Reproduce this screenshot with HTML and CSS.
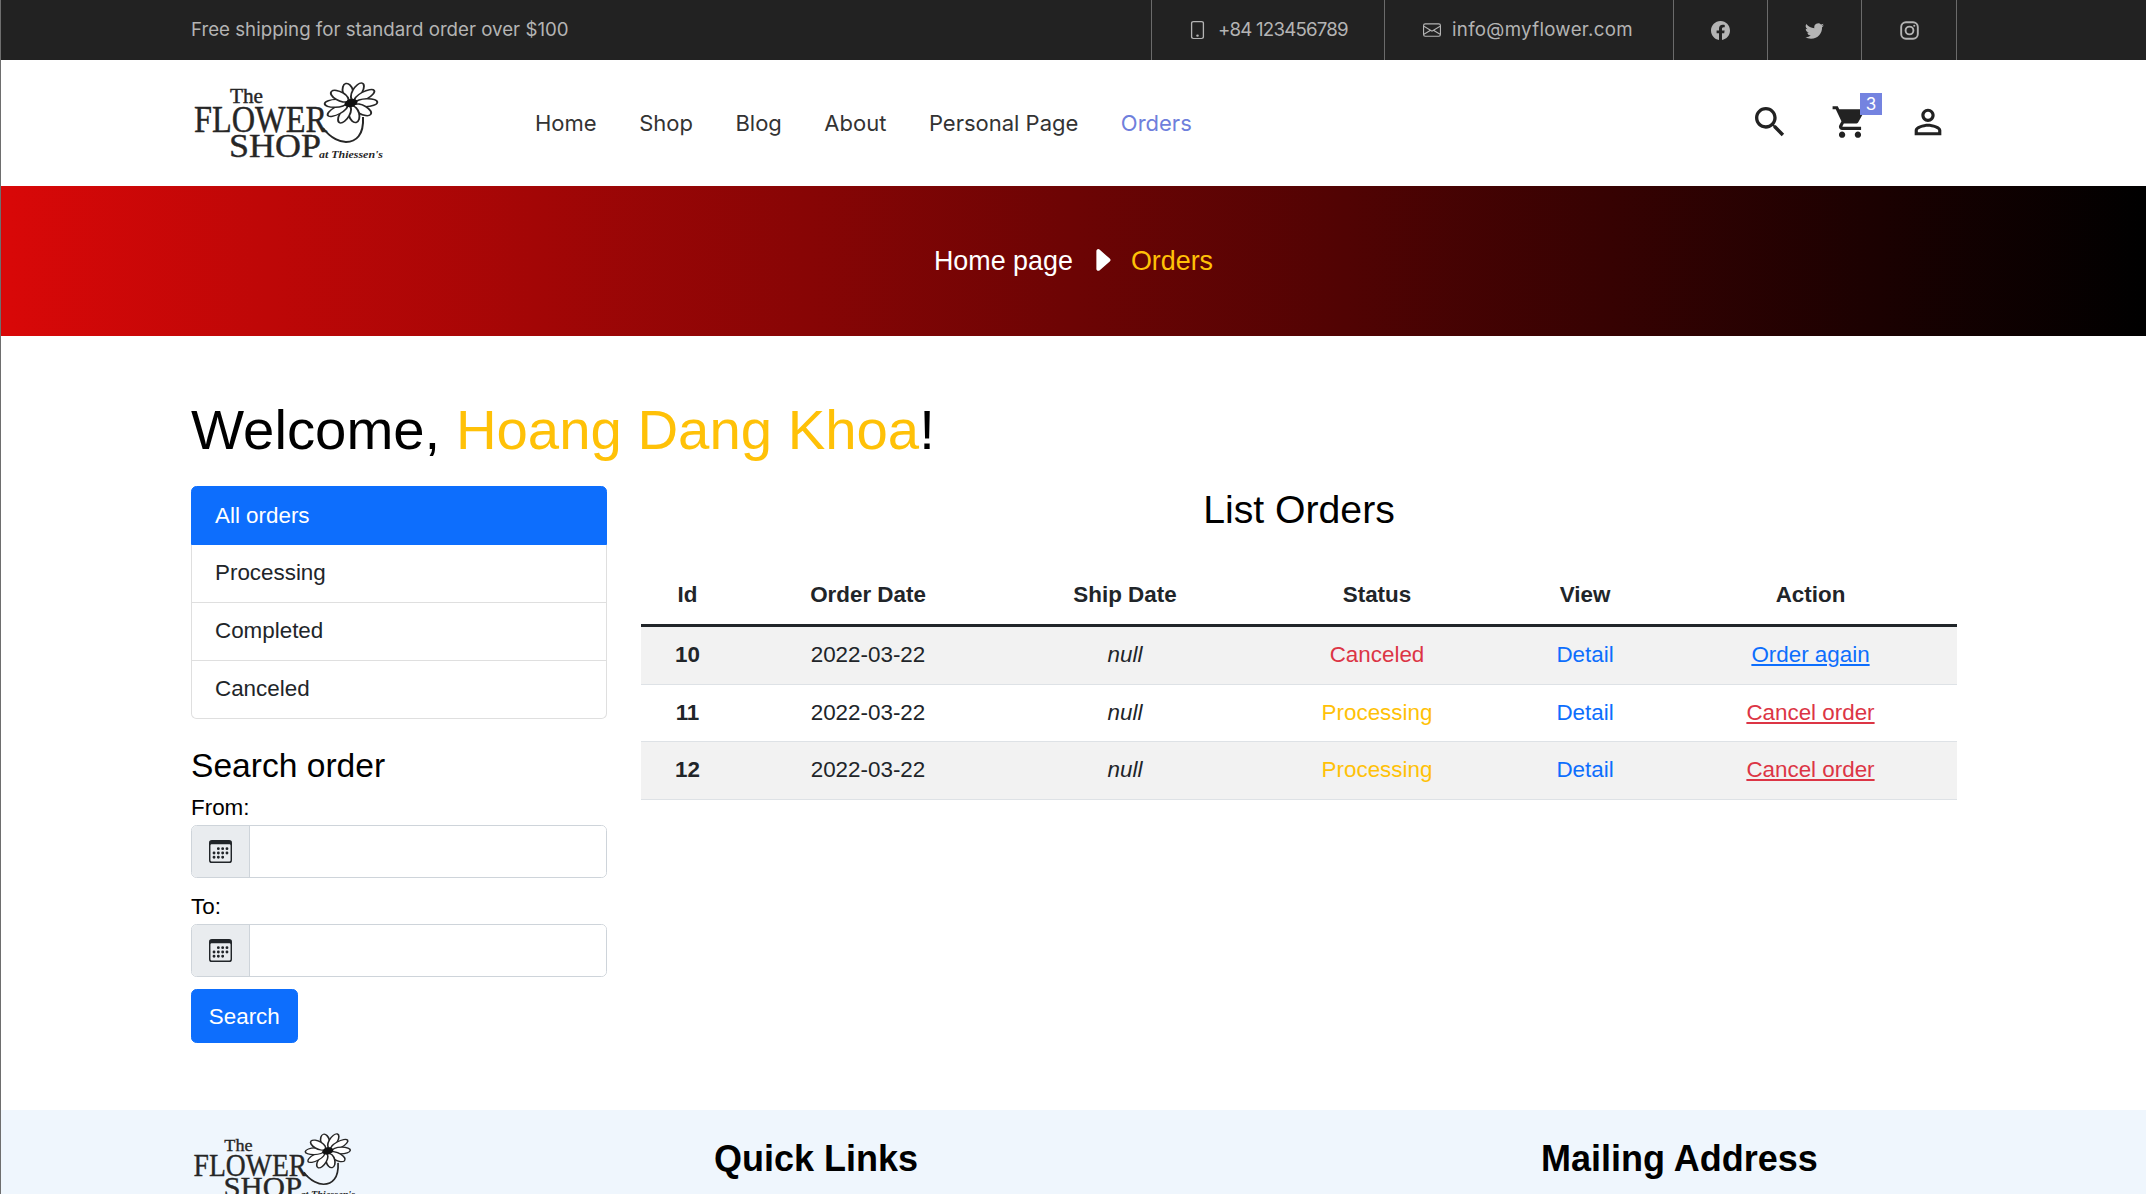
FILE: index.html
```html
<!DOCTYPE html>
<html lang="en">
<head>
<meta charset="utf-8">
<title>Orders</title>
<link rel="stylesheet" href="styles.css">
</head>
<body>
<div class="topbar">
  <span class="promo">Free shipping for standard order over $100</span>
  <a class="cell cell-phone"><svg class="ti ti-phone" viewBox="0 0 16 16" preserveAspectRatio="none"><path d="M11 1a1 1 0 0 1 1 1v12a1 1 0 0 1-1 1H5a1 1 0 0 1-1-1V2a1 1 0 0 1 1-1h6zM5 0a2 2 0 0 0-2 2v12a2 2 0 0 0 2 2h6a2 2 0 0 0 2-2V2a2 2 0 0 0-2-2H5z"/><path d="M8 14a1 1 0 1 0 0-2 1 1 0 0 0 0 2z"/></svg>+84 123456789</a>
  <a class="cell cell-mail"><svg class="ti" viewBox="0 0 16 16"><path d="M0 4a2 2 0 0 1 2-2h12a2 2 0 0 1 2 2v8a2 2 0 0 1-2 2H2a2 2 0 0 1-2-2V4Zm2-1a1 1 0 0 0-1 1v.217l7 4.2 7-4.2V4a1 1 0 0 0-1-1H2Zm13 2.383-4.708 2.825L15 11.105V5.383Zm-.034 6.876-5.64-3.471L8 9.583l-1.326-.795-5.64 3.47A1 1 0 0 0 2 13h12a1 1 0 0 0 .966-.741ZM1 11.105l4.708-2.897L1 5.383v5.722Z"/></svg>info@myflower.com</a>
  <a class="cell cell-social"><svg class="ti" viewBox="0 0 16 16"><path d="M16 8.049c0-4.446-3.582-8.05-8-8.05C3.58 0-.002 3.603-.002 8.05c0 4.017 2.926 7.347 6.75 7.951v-5.625h-2.03V8.05H6.75V6.275c0-2.017 1.195-3.131 3.022-3.131.876 0 1.791.157 1.791.157v1.98h-1.009c-.993 0-1.303.621-1.303 1.258v1.51h2.218l-.354 2.326H9.25V16c3.824-.604 6.75-3.934 6.75-7.951z"/></svg></a>
  <a class="cell cell-social"><svg class="ti" viewBox="0 0 16 16"><path d="M5.026 15c6.038 0 9.341-5.003 9.341-9.334 0-.14 0-.282-.006-.422A6.685 6.685 0 0 0 16 3.542a6.658 6.658 0 0 1-1.889.518 3.301 3.301 0 0 0 1.447-1.817 6.533 6.533 0 0 1-2.087.793A3.286 3.286 0 0 0 7.875 6.03a9.325 9.325 0 0 1-6.767-3.429 3.289 3.289 0 0 0 1.018 4.382A3.323 3.323 0 0 1 .64 6.575v.045a3.288 3.288 0 0 0 2.632 3.218 3.203 3.203 0 0 1-.865.115 3.23 3.23 0 0 1-.614-.057 3.283 3.283 0 0 0 3.067 2.277A6.588 6.588 0 0 1 .78 13.58a6.32 6.32 0 0 1-.78-.045A9.344 9.344 0 0 0 5.026 15z"/></svg></a>
  <a class="cell cell-social"><svg class="ti ti-line" viewBox="0 0 16 16"><rect x="1" y="1" width="14" height="14" rx="4"/><circle cx="8" cy="8" r="3.3"/><circle class="ti-dot" cx="12" cy="4" r=".9"/></svg></a>
</div>

<header class="header">
  <svg class="logo" viewBox="0 0 200 84">
    <text class="logo-serif" x="39" y="22" font-size="20" textLength="33" lengthAdjust="spacingAndGlyphs">The</text>
    <text class="logo-serif" x="3" y="51" font-size="38" textLength="133" lengthAdjust="spacingAndGlyphs">FLOWER</text>
    <text class="logo-serif" x="38" y="76" font-size="34" textLength="92" lengthAdjust="spacingAndGlyphs">SHOP</text>
    <text class="logo-script" x="128" y="77" font-size="11" textLength="64" lengthAdjust="spacingAndGlyphs">at Thiessen's</text>
    <path class="logo-tail" d="M132 47C140 58 150 61 155 61C165 61 173 54 172 36"/>
    <g transform="translate(160 22) rotate(-15) scale(1.12 .84)">
      <ellipse class="petal" cy="-14" rx="4.6" ry="10"/>
      <ellipse class="petal" cy="-14" rx="4.6" ry="10" transform="rotate(36)"/>
      <ellipse class="petal" cy="-14" rx="4.6" ry="10" transform="rotate(72)"/>
      <ellipse class="petal" cy="-14" rx="4.6" ry="10" transform="rotate(108)"/>
      <ellipse class="petal" cy="-14" rx="4.6" ry="10" transform="rotate(144)"/>
      <ellipse class="petal" cy="-14" rx="4.6" ry="10" transform="rotate(180)"/>
      <ellipse class="petal" cy="-14" rx="4.6" ry="10" transform="rotate(216)"/>
      <ellipse class="petal" cy="-14" rx="4.6" ry="10" transform="rotate(252)"/>
      <ellipse class="petal" cy="-14" rx="4.6" ry="10" transform="rotate(288)"/>
      <ellipse class="petal" cy="-14" rx="4.6" ry="10" transform="rotate(324)"/>
      <ellipse class="logo-eye" rx="6" ry="4.5"/>
    </g>
  </svg>
  <nav class="nav">
    <a>Home</a><a>Shop</a><a>Blog</a><a>About</a><a>Personal Page</a><a class="nav-on">Orders</a>
  </nav>
  <div class="tools">
    <svg class="tool" viewBox="0 0 24 24"><path d="M15.5 14h-.79l-.28-.27C15.41 12.59 16 11.11 16 9.5 16 5.91 13.09 3 9.5 3S3 5.91 3 9.5 5.91 16 9.5 16c1.61 0 3.09-.59 4.23-1.57l.27.28v.79l5 4.99L20.49 19l-4.99-5zm-6 0C7.01 14 5 11.99 5 9.5S7.01 5 9.5 5 14 7.01 14 9.5 11.99 14 9.5 14z"/></svg>
    <span class="cart">
      <svg class="tool tool-cart" viewBox="0 0 24 24"><path d="M7 18c-1.1 0-1.99.9-1.99 2S5.9 22 7 22s2-.9 2-2-.9-2-2-2zM1 2v2h2l3.6 7.59-1.35 2.45c-.16.28-.25.61-.25.96 0 1.1.9 2 2 2h12v-2H7.42c-.14 0-.25-.11-.25-.25l.03-.12.9-1.63h7.45c.75 0 1.41-.41 1.75-1.03l3.58-6.47c.08-.14.12-.31.12-.48 0-.55-.45-1-1-1H5.21l-.94-2H1zm16 16c-1.1 0-1.99.9-1.99 2s.89 2 1.99 2 2-.9 2-2-.9-2-2-2z"/></svg>
      <span class="badge">3</span>
    </span>
    <svg class="tool" viewBox="0 0 24 24"><path d="M12 5.9c1.16 0 2.1.94 2.1 2.1s-.94 2.1-2.1 2.1S9.9 9.16 9.9 8s.94-2.1 2.1-2.1m0 9c2.97 0 6.1 1.46 6.1 2.1v1.1H5.9V17c0-.64 3.13-2.1 6.1-2.1M12 4C9.79 4 8 5.79 8 8s1.79 4 4 4 4-1.79 4-4-1.79-4-4-4zm0 9c-2.67 0-8 1.34-8 4v3h16v-3c0-2.66-5.33-4-8-4z"/></svg>
  </div>
</header>

<section class="banner">
  <span>Home page</span>
  <svg class="crumb" viewBox="0 0 16 16"><path d="m12.14 8.753-5.482 4.796c-.646.566-1.658.106-1.658-.753V3.204a1 1 0 0 1 1.659-.753l5.48 4.796a1 1 0 0 1 0 1.506z"/></svg>
  <span class="gold">Orders</span>
</section>

<main class="main">
  <h1 class="welcome">Welcome, <span class="gold">Hoang Dang Khoa</span>!</h1>
  <div class="cols">
    <aside class="side">
      <ul class="list">
        <li class="list-on">All orders</li>
        <li>Processing</li>
        <li>Completed</li>
        <li>Canceled</li>
      </ul>
      <h4 class="side-title">Search order</h4>
      <label class="lab">From:</label>
      <div class="igroup">
        <span class="addon"><svg class="cal" viewBox="0 0 16 16"><path d="M14 0H2a2 2 0 0 0-2 2v12a2 2 0 0 0 2 2h12a2 2 0 0 0 2-2V2a2 2 0 0 0-2-2zM1 3.857C1 3.384 1.448 3 2 3h12c.552 0 1 .384 1 .857v10.286c0 .473-.448.857-1 .857H2c-.552 0-1-.384-1-.857V3.857z"/><path d="M6.5 7a1 1 0 1 0 0-2 1 1 0 0 0 0 2zm3 0a1 1 0 1 0 0-2 1 1 0 0 0 0 2zm3 0a1 1 0 1 0 0-2 1 1 0 0 0 0 2zm-9 3a1 1 0 1 0 0-2 1 1 0 0 0 0 2zm3 0a1 1 0 1 0 0-2 1 1 0 0 0 0 2zm3 0a1 1 0 1 0 0-2 1 1 0 0 0 0 2zm3 0a1 1 0 1 0 0-2 1 1 0 0 0 0 2zm-9 3a1 1 0 1 0 0-2 1 1 0 0 0 0 2zm3 0a1 1 0 1 0 0-2 1 1 0 0 0 0 2zm3 0a1 1 0 1 0 0-2 1 1 0 0 0 0 2z"/></svg></span>
        <input class="field" type="text">
      </div>
      <label class="lab lab-next">To:</label>
      <div class="igroup">
        <span class="addon"><svg class="cal" viewBox="0 0 16 16"><path d="M14 0H2a2 2 0 0 0-2 2v12a2 2 0 0 0 2 2h12a2 2 0 0 0 2-2V2a2 2 0 0 0-2-2zM1 3.857C1 3.384 1.448 3 2 3h12c.552 0 1 .384 1 .857v10.286c0 .473-.448.857-1 .857H2c-.552 0-1-.384-1-.857V3.857z"/><path d="M6.5 7a1 1 0 1 0 0-2 1 1 0 0 0 0 2zm3 0a1 1 0 1 0 0-2 1 1 0 0 0 0 2zm3 0a1 1 0 1 0 0-2 1 1 0 0 0 0 2zm-9 3a1 1 0 1 0 0-2 1 1 0 0 0 0 2zm3 0a1 1 0 1 0 0-2 1 1 0 0 0 0 2zm3 0a1 1 0 1 0 0-2 1 1 0 0 0 0 2zm3 0a1 1 0 1 0 0-2 1 1 0 0 0 0 2zm-9 3a1 1 0 1 0 0-2 1 1 0 0 0 0 2zm3 0a1 1 0 1 0 0-2 1 1 0 0 0 0 2zm3 0a1 1 0 1 0 0-2 1 1 0 0 0 0 2z"/></svg></span>
        <input class="field" type="text">
      </div>
      <button class="btn" type="button">Search</button>
    </aside>
    <section class="orders">
      <h3 class="orders-title">List Orders</h3>
      <table class="table">
        <colgroup><col class="c1"><col class="c2"><col class="c3"><col class="c4"><col class="c5"><col class="c6"></colgroup>
        <thead>
          <tr><th>Id</th><th>Order Date</th><th>Ship Date</th><th>Status</th><th>View</th><th>Action</th></tr>
        </thead>
        <tbody>
          <tr class="odd"><th>10</th><td>2022-03-22</td><td><em>null</em></td><td class="red">Canceled</td><td class="blue">Detail</td><td><a class="blue under">Order again</a></td></tr>
          <tr><th>11</th><td>2022-03-22</td><td><em>null</em></td><td class="gold">Processing</td><td class="blue">Detail</td><td><a class="red under">Cancel order</a></td></tr>
          <tr class="odd"><th>12</th><td>2022-03-22</td><td><em>null</em></td><td class="gold">Processing</td><td class="blue">Detail</td><td><a class="red under">Cancel order</a></td></tr>
        </tbody>
      </table>
    </section>
  </div>
</main>

<footer class="footer">
  <svg class="logo logo-foot" viewBox="0 0 200 84">
    <text class="logo-serif" x="39" y="22" font-size="20" textLength="33" lengthAdjust="spacingAndGlyphs">The</text>
    <text class="logo-serif" x="3" y="51" font-size="38" textLength="133" lengthAdjust="spacingAndGlyphs">FLOWER</text>
    <text class="logo-serif" x="38" y="76" font-size="34" textLength="92" lengthAdjust="spacingAndGlyphs">SHOP</text>
    <text class="logo-script" x="128" y="77" font-size="11" textLength="64" lengthAdjust="spacingAndGlyphs">at Thiessen's</text>
    <path class="logo-tail" d="M132 47C140 58 150 61 155 61C165 61 173 54 172 36"/>
    <g transform="translate(160 22) rotate(-15) scale(1.12 .84)">
      <ellipse class="petal" cy="-14" rx="4.6" ry="10"/>
      <ellipse class="petal" cy="-14" rx="4.6" ry="10" transform="rotate(36)"/>
      <ellipse class="petal" cy="-14" rx="4.6" ry="10" transform="rotate(72)"/>
      <ellipse class="petal" cy="-14" rx="4.6" ry="10" transform="rotate(108)"/>
      <ellipse class="petal" cy="-14" rx="4.6" ry="10" transform="rotate(144)"/>
      <ellipse class="petal" cy="-14" rx="4.6" ry="10" transform="rotate(180)"/>
      <ellipse class="petal" cy="-14" rx="4.6" ry="10" transform="rotate(216)"/>
      <ellipse class="petal" cy="-14" rx="4.6" ry="10" transform="rotate(252)"/>
      <ellipse class="petal" cy="-14" rx="4.6" ry="10" transform="rotate(288)"/>
      <ellipse class="petal" cy="-14" rx="4.6" ry="10" transform="rotate(324)"/>
      <ellipse class="logo-eye" rx="6" ry="4.5"/>
    </g>
  </svg>
  <h4 class="foot-title">Quick Links</h4>
  <h4 class="foot-title">Mailing Address</h4>
</footer>
</body>
</html>
```

FILE: styles.css
```css
* { box-sizing: border-box; }
html, body { height: 100%; }
body {
  margin: 0;
  overflow: hidden;
  border-left: 1px solid #6e6e6e;
  background: #fff;
  color: #000;
  font-family: "Liberation Sans", Arial, sans-serif;
  font-size: 22.4px;
  line-height: 1.5;
}
a { color: inherit; }

.topbar {
  display: flex;
  align-items: stretch;
  height: 60px;
  padding: 0 189px 0 190px;
  background: #222;
  color: #b4b4b4;
  font-family: Inter, "Open Sans", sans-serif;
  font-size: 18.7px;
}
.promo { margin-right: auto; align-self: center; }
.cell {
  display: flex;
  align-items: center;
  justify-content: center;
  border-left: 1px solid #6b6b6b;
}
.cell-phone { width: 233px; padding-left: 35px; justify-content: flex-start; gap: 10px; letter-spacing: -.8px; }
.cell-mail { width: 289px; padding-left: 38px; justify-content: flex-start; gap: 11px; letter-spacing: .3px; }
.cell-social { width: 94px; }
.cell-social:last-child { width: 96px; border-right: 1px solid #6b6b6b; }
.ti { width: 18px; height: 18px; fill: #b4b4b4; flex: none; }
.cell-social .ti { width: 19px; height: 19px; }
.ti-phone { width: 21px; height: 18px; }
.ti-line { fill: none; stroke: #b4b4b4; stroke-width: 1.6; }
.ti-line .ti-dot { fill: #b4b4b4; stroke: none; }

.header {
  display: flex;
  align-items: center;
  height: 126px;
  padding: 0 189px 0 190px;
}
.logo { display: block; width: 200px; height: 84px; flex: none; }
.logo-serif { font-family: "Liberation Serif", serif; fill: #262626; stroke: #262626; stroke-width: .4; }
.logo-script { font-family: "Liberation Serif", serif; font-style: italic; font-weight: 700; fill: #262626; }
.logo-tail { fill: none; stroke: #262626; stroke-width: 2; }
.petal { fill: #fff; stroke: #262626; stroke-width: 1.7; }
.logo-eye { fill: #111; }
.nav {
  display: flex;
  gap: 42.5px;
  margin-left: 144px;
  color: #333;
  font-family: Inter, "Open Sans", sans-serif;
  font-size: 22px;
}
.nav-on { color: #6f7fdc; }
.tools {
  display: flex;
  align-items: center;
  margin-left: auto;
  margin-right: 9px;
  padding-bottom: 2px;
}
.tool { display: block; width: 40px; height: 40px; fill: #222; }
.tool-cart { width: 38px; height: 38px; }
.cart { position: relative; display: block; margin: 0 39px 0 41px; }
.badge {
  position: absolute;
  top: -10px;
  right: -13px;
  width: 22px;
  height: 22px;
  background: #7483e0;
  color: #fff;
  font-family: Inter, sans-serif;
  font-size: 17px;
  line-height: 22px;
  text-align: center;
}

.banner {
  display: flex;
  align-items: center;
  justify-content: center;
  gap: 14px;
  height: 150px;
  background: linear-gradient(90deg, #d90808 0%, #000 100%);
  color: #fff;
  font-size: 26.88px;
}
.crumb { width: 30px; height: 30px; margin-top: -3px; fill: #fff; }

.gold { color: #ffc107; }
.red { color: #dc3545; }
.blue { color: #0d6efd; }
.under { text-decoration: underline; }

.main { padding: 60px 189px 67px 190px; }
.welcome {
  margin: 0 0 22px;
  font-size: 56.3px;
  font-weight: 400;
  line-height: 68px;
}
.cols {
  display: grid;
  grid-template-columns: 416px 1316px;
  column-gap: 34px;
}
.side { display: flex; flex-direction: column; align-items: flex-start; }
.list {
  width: 100%;
  margin: 0;
  padding: 0;
  list-style: none;
  color: #212529;
}
.list li {
  padding: 11.2px 23px 12.2px;
  border: 1px solid #dfdfdf;
  border-top: 0;
}
.list li:last-child { border-radius: 0 0 5.6px 5.6px; }
.list .list-on {
  padding: 11.7px 23px;
  border: 1px solid #0d6efd;
  border-radius: 5.6px 5.6px 0 0;
  background: #0d6efd;
  color: #fff;
}
.side-title {
  margin: 27px 0 5px;
  font-size: 33.6px;
  font-weight: 400;
  line-height: 40px;
}
.lab { display: block; }
.lab-next { margin-top: 12px; }
.igroup {
  display: flex;
  width: 100%;
  height: 53.6px;
  border: 1px solid #ced4da;
  border-radius: 5.6px;
  overflow: hidden;
}
.addon {
  display: flex;
  align-items: center;
  justify-content: center;
  width: 58px;
  flex: none;
  background: #e9ecef;
  border-right: 1px solid #ced4da;
}
.cal { width: 23px; height: 23px; fill: #212529; }
.field { flex: 1; min-width: 0; border: 0; background: #fff; outline: 0; }
.btn {
  margin-top: 12px;
  padding: 9.2px 16.8px;
  border: 1px solid #0d6efd;
  border-radius: 5.6px;
  background: #0d6efd;
  color: #fff;
  font: inherit;
}

.orders-title {
  margin: 0 0 33px;
  font-size: 39.2px;
  font-weight: 400;
  line-height: 47px;
  text-align: center;
}
.table {
  width: 100%;
  border-collapse: collapse;
  table-layout: fixed;
  color: #212529;
  text-align: center;
}
.c1 { width: 93px; }
.c2 { width: 268px; }
.c3 { width: 246px; }
.c4 { width: 258px; }
.c5 { width: 158px; }
.c6 { width: 293px; }
.table th, .table td {
  padding: 11.2px 8px 12px;
  border-bottom: 1px solid #dee2e6;
  font-size: 22.4px;
}
.table td.red { color: #dc3545; }
.table td.gold { color: #ffc107; }
.table td.blue { color: #0d6efd; }
.table thead th { padding: 11.6px 8px 12.5px; border-bottom: 3px solid #212529; }
.odd { background: #f2f2f2; }

.footer {
  display: grid;
  grid-template-columns: 523px 827px 1fr;
  padding: 22px 189px 0 190px;
  background: #eff6fd;
}
.logo-foot { width: 171px; height: 72px; }
.foot-title {
  margin: 5px 0 0;
  font-size: 36px;
  font-weight: 700;
  line-height: 44px;
}
```
